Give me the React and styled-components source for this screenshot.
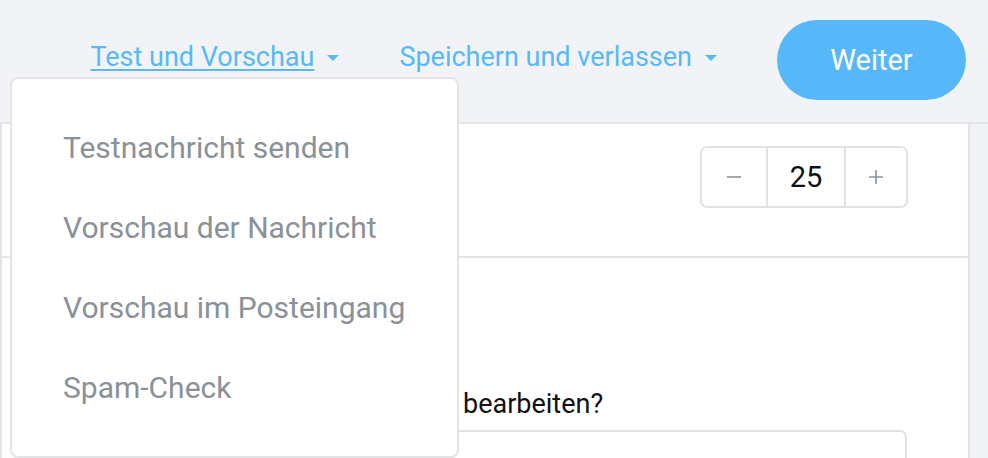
import styled, { createGlobalStyle } from "styled-components";

const Global = createGlobalStyle`
  * { box-sizing: border-box; }
  html, body { margin: 0; padding: 0; }
  body {
    font-family: Roboto, "Liberation Sans", sans-serif;
    background: #f2f3f7;
    width: 988px;
    height: 458px;
    overflow: hidden;
  }
`;

const Page = styled.div`
  position: relative;
  width: 988px;
  height: 458px;
  overflow: hidden;
`;

const Header = styled.header`
  height: 124px;
  display: flex;
  align-items: center;
  justify-content: flex-end;
  padding: 0 22px 9px 0;
  border-bottom: 2px solid #e3e4e8;
  background: #f2f3f7;
`;

const NavLink = styled.a`
  display: flex;
  align-items: center;
  gap: 13px;
  margin-right: 60px;
  font-size: 27px;
  color: #58b9f7;
  text-decoration: none;
  cursor: pointer;
  span {
    text-decoration: ${(p) => (p.$active ? "underline" : "none")};
    text-underline-offset: 3px;
    text-decoration-thickness: 2px;
  }
`;

const Caret = styled.i`
  width: 0;
  height: 0;
  border-left: 6px solid transparent;
  border-right: 6px solid transparent;
  border-top: 6px solid #58b9f7;
  margin-top: 2px;
`;

const Button = styled.button`
  width: 189px;
  height: 80px;
  border: none;
  border-radius: 40px;
  background: #56b8f8;
  color: #fff;
  font-family: inherit;
  font-size: 29px;
  margin-top: 6px;
`;

const Body = styled.div`
  display: flex;
  height: 334px;
`;

const Panel = styled.main`
  width: 970px;
  background: #fff;
  border-left: 2px solid #e3e4e8;
  border-right: 2px solid #e3e4e8;
`;

const Section = styled.section`
  height: 134px;
  display: flex;
  align-items: center;
  justify-content: flex-end;
  padding: 0 60px 0 61px;
  border-bottom: 2px solid #e3e4e8;
`;

const Stepper = styled.div`
  display: flex;
  height: 62px;
  border: 2px solid #e1e2e6;
  border-radius: 7px;
  margin-top: -27px;
`;

const StepBtn = styled.div`
  width: ${(p) => p.$w}px;
  display: flex;
  align-items: center;
  justify-content: center;
  font-size: 29px;
  color: #111;
  border-left: ${(p) => (p.$sep ? "2px solid #e1e2e6" : "none")};
`;

const Question = styled.div`
  padding: 130px 61px 0 61px;
`;

const QLabel = styled.div`
  font-size: 27px;
  color: #111;
  margin-left: 400px;
`;

const Input = styled.div`
  margin-top: 10px;
  height: 60px;
  border: 2px solid #e1e2e6;
  border-radius: 7px;
`;

const Side = styled.aside`
  flex: 1;
  background: #f2f3f7;
`;

const Menu = styled.ul`
  position: absolute;
  top: 77px;
  left: 10px;
  width: 449px;
  height: 381px;
  margin: 0;
  padding: 28px 0;
  list-style: none;
  background: #fff;
  border: 2px solid #e3e4e8;
  border-radius: 8px;
`;

const MenuItem = styled.li`
  height: 80px;
  display: flex;
  align-items: center;
  padding-left: 51px;
  font-size: 30px;
  color: #8a9199;
`;

const items = [
  "Testnachricht senden",
  "Vorschau der Nachricht",
  "Vorschau im Posteingang",
  "Spam-Check",
];

const Minus = () => (
  <svg width="16" height="16" viewBox="0 0 16 16">
    <path d="M1 8h14" stroke="#8a94a0" strokeWidth="1.6" />
  </svg>
);

const Plus = () => (
  <svg width="16" height="16" viewBox="0 0 16 16">
    <path d="M1 8h14M8 1v14" stroke="#8a94a0" strokeWidth="1.6" />
  </svg>
);

export default function App() {
  return (
    <Page>
      <Global />
      <Header>
        <NavLink $active>
          <span>Test und Vorschau</span>
          <Caret />
        </NavLink>
        <NavLink>
          <span>Speichern und verlassen</span>
          <Caret />
        </NavLink>
        <Button>Weiter</Button>
      </Header>
      <Body>
        <Panel>
          <Section>
            <Stepper>
              <StepBtn $w={64}><Minus /></StepBtn>
              <StepBtn $w={78} $sep>25</StepBtn>
              <StepBtn $w={62} $sep><Plus /></StepBtn>
            </Stepper>
          </Section>
          <Question>
            <QLabel>bearbeiten?</QLabel>
            <Input />
          </Question>
        </Panel>
        <Side />
      </Body>
      <Menu>
        {items.map((t) => (
          <MenuItem key={t}>{t}</MenuItem>
        ))}
      </Menu>
    </Page>
  );
}
